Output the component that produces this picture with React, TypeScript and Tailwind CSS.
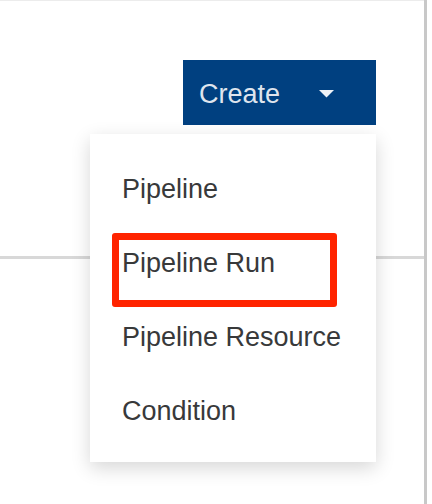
import { useState } from "react";

const items = ["Pipeline", "Pipeline Run", "Pipeline Resource", "Condition"];

function Caret() {
  return (
    <svg width="15" height="8" viewBox="0 0 15 8" aria-hidden="true">
      <path d="M0 0 H15 L7.5 7.5 Z" fill="currentColor" />
    </svg>
  );
}

export default function App() {
  const [open] = useState(true);

  return (
    <div
      className="w-[432px] h-[504px] bg-white overflow-hidden flex"
      style={{ fontFamily: '"Liberation Sans", Arial, sans-serif' }}
    >
      <div className="w-[424px] h-full flex flex-col border-t border-[#ececec]">
        <div className="flex justify-end pr-[48px] pt-[59px]">
          <div className="relative">
            <button
              type="button"
              className="w-[193px] h-[65px] bg-[#004080] text-[#dfe5ee] flex items-center pl-[16px] pt-[4px] text-[27px] leading-none"
            >
              <span>Create</span>
              <span className="ml-[39px] -mt-[2px] text-[#eef2f7] flex">
                <Caret />
              </span>
            </button>

            {open && (
              <div className="absolute right-0 top-full mt-[9px] w-[286px] h-[328px] bg-white py-[16px] shadow-[0_6px_18px_rgba(3,3,3,0.16)] z-10">
                <ul className="flex flex-col">
                  {items.map((label) => (
                    <li
                      key={label}
                      className="h-[74px] flex items-center pl-[32px] pt-[4px] text-[27px] text-[#38393a]"
                    >
                      {label}
                    </li>
                  ))}
                </ul>
                <div className="absolute left-[22px] top-[99px] w-[225px] h-[74px] border-[7px] border-[#ff2400] rounded-[3px]" />
              </div>
            )}
          </div>
        </div>
        <div className="mt-[131px] h-[3px] bg-[#d8d8d8]" />
      </div>
      <div className="w-[3px] h-full bg-[#c8c8c8]" />
      <div className="flex-1 h-full bg-white" />
    </div>
  );
}
